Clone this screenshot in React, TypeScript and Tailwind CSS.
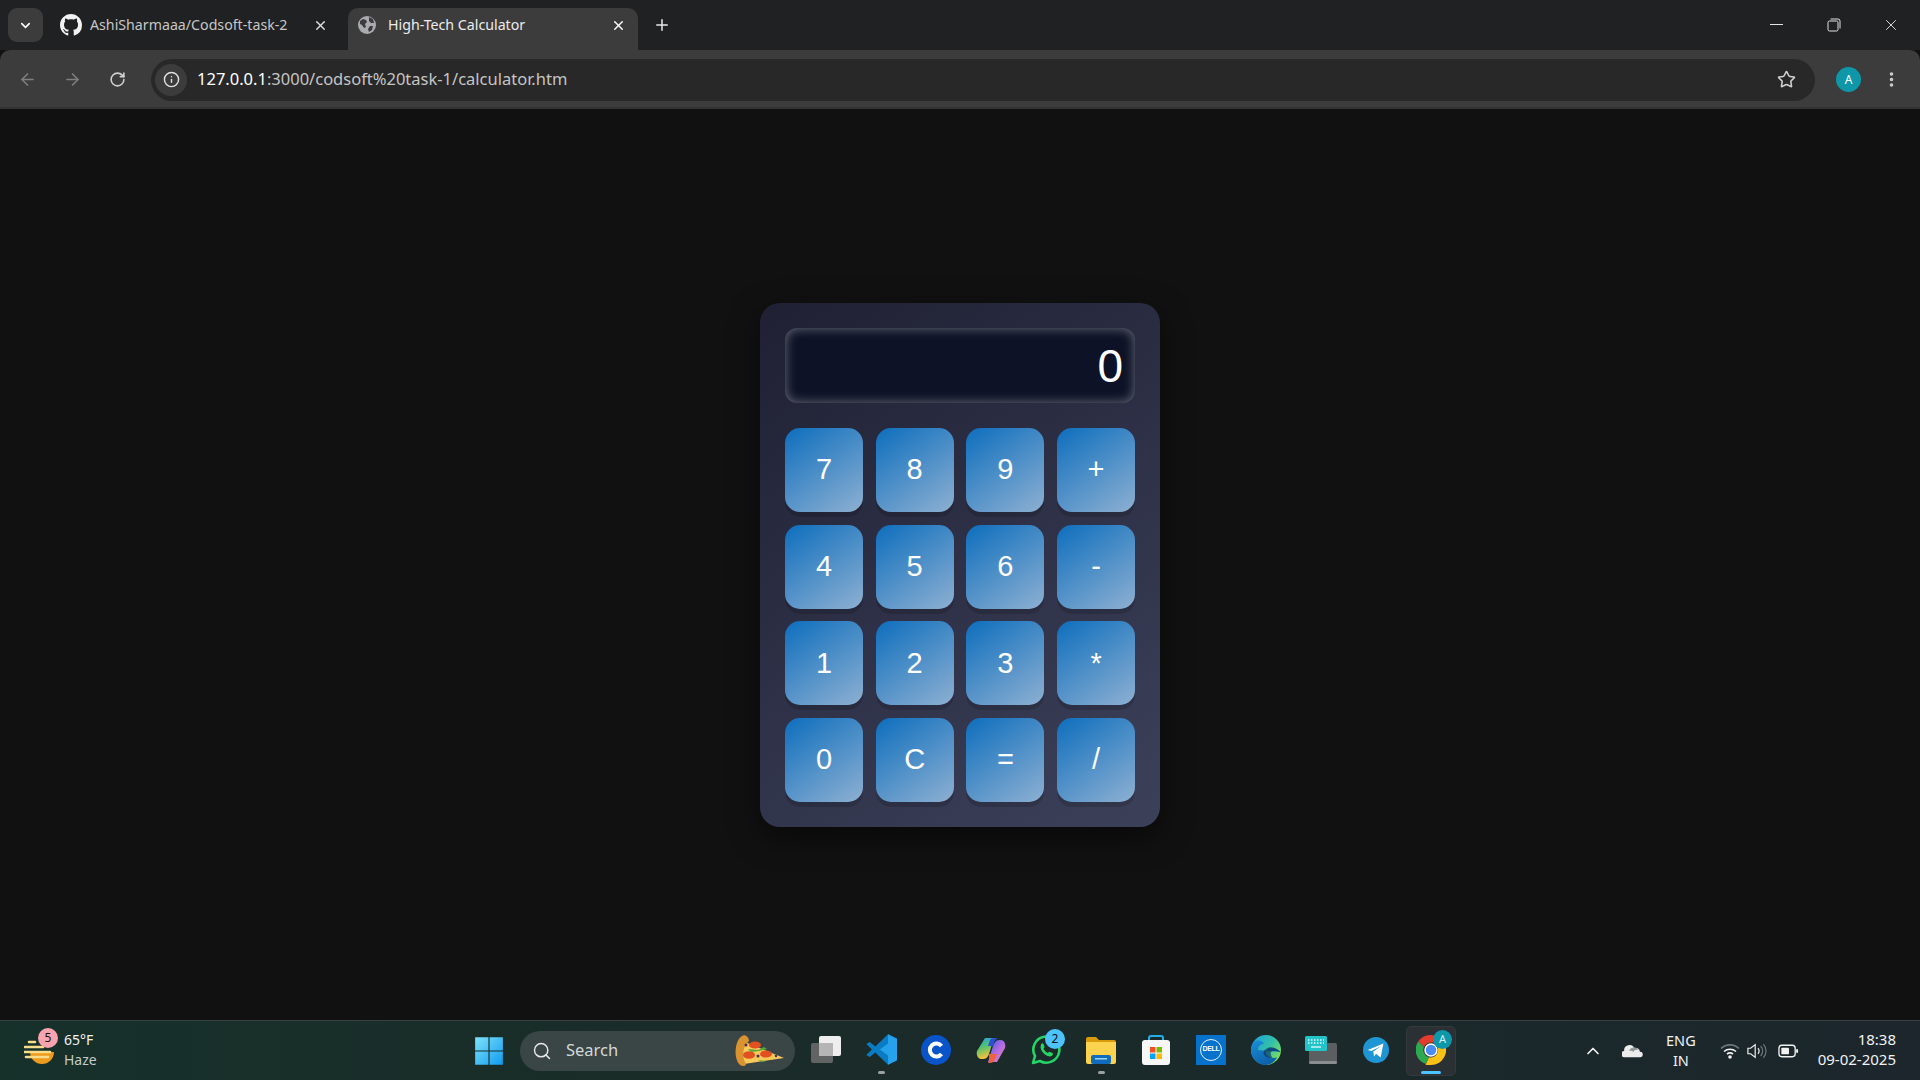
import { ArrowLeft, ArrowRight, ChevronDown, ChevronUp, Info, MoreVertical, Plus, RotateCw, Search, Star, X } from "lucide-react";
import type { ReactNode } from "react";

const KEYS = ["7", "8", "9", "+", "4", "5", "6", "-", "1", "2", "3", "*", "0", "C", "=", "/"];

function GitHubMark() {
  return (
    <svg viewBox="0 0 16 16" className="h-[22px] w-[22px]" fill="#f2f2f2">
      <path d="M8 0C3.58 0 0 3.58 0 8c0 3.54 2.29 6.53 5.47 7.59.4.07.55-.17.55-.38 0-.19-.01-.82-.01-1.49-2.01.37-2.53-.49-2.69-.94-.09-.23-.48-.94-.82-1.13-.28-.15-.68-.52-.01-.53.63-.01 1.08.58 1.23.82.72 1.21 1.87.87 2.33.66.07-.52.28-.87.51-1.07-1.78-.2-3.64-.89-3.64-3.95 0-.87.31-1.59.82-2.15-.08-.2-.36-1.02.08-2.12 0 0 .67-.21 2.2.82.64-.18 1.32-.27 2-.27s1.36.09 2 .27c1.53-1.04 2.2-.82 2.2-.82.44 1.1.16 1.92.08 2.12.51.56.82 1.27.82 2.15 0 3.07-1.87 3.75-3.65 3.95.29.25.54.73.54 1.48 0 1.07-.01 1.93-.01 2.2 0 .21.15.46.55.38A8.01 8.01 0 0 0 16 8c0-4.42-3.58-8-8-8z" />
    </svg>
  );
}

function GlobeMark() {
  return (
    <svg viewBox="0 0 18 18" className="h-[18px] w-[18px]">
      <circle cx="9" cy="9" r="9" fill="#a9abae" />
      <path d="M2 5l3-2 3 1 1 2-2 2 1 3-2 1-2-3-2-1zM11 1l4 2 1 4-3 0-2-2zM12 10l3 0-1 4-3 2-1-3z" fill="#3c3c3c" />
    </svg>
  );
}

function BrowserChrome() {
  return (
    <header className="shrink-0 font-['Noto_Sans',sans-serif]">
      <div className="flex h-[50px] items-start bg-[#1f2122] pl-2 text-[14.2px]">
        <div className="mt-2 flex h-[34px] w-[35px] items-center justify-center rounded-[9px] bg-[#3c3c3c] text-white">
          <ChevronDown size={15} strokeWidth={2.5} />
        </div>
        <div className="ml-[17px] flex h-[50px] w-[288px] items-center text-[#c7c7c7]">
          <GitHubMark />
          <span className="ml-[8px] flex-1">AshiSharmaaa/Codsoft-task-2</span>
          <X size={15} strokeWidth={2.25} className="mr-[20px] text-[#dedede]" />
        </div>
        <div className="mt-2 flex h-[42px] w-[290px] items-center rounded-t-[10px] bg-[#3c3c3c] pb-[8px] pl-[10px] text-[#ececec]">
          <GlobeMark />
          <span className="ml-[12px] flex-1">High-Tech Calculator</span>
          <X size={15} strokeWidth={2.25} className="mr-[12px] text-white" />
        </div>
        <Plus size={18} strokeWidth={2} className="ml-[15px] mt-4 text-[#e8e8e8]" />
        <div className="ml-auto flex h-[50px] items-center">
          <svg viewBox="0 0 14 14" className="mr-[43px] h-[14px] w-[14px]" fill="none" stroke="#e4e4e4" strokeWidth="1">
            <path d="M0 9.5h13" transform="translate(0 -3)" />
          </svg>
          <svg viewBox="0 0 14 14" className="mr-[41px] h-[14px] w-[14px]" fill="none" stroke="#e4e4e4" strokeWidth="1">
            <rect x="1" y="3" width="10" height="10" rx="1.5" />
            <path d="M3.5 1h7.5a2 2 0 0 1 2 2v7.5" />
          </svg>
          <X size={18} strokeWidth={1.2} className="mr-[20px] text-[#ececec]" />
        </div>
      </div>
      <div className="flex h-[59px] items-center rounded-t-[10px] bg-[#3c3c3c] pl-[18px] pr-0 shadow-[inset_0_-2px_0_#333]">
        <ArrowLeft size={19} strokeWidth={2} className="text-[#7f7f7f]" />
        <ArrowRight size={19} strokeWidth={2} className="ml-[26px] text-[#7f7f7f]" />
        <RotateCw size={17} strokeWidth={2.25} className="ml-[27px] text-[#d0d0d0]" />
        <div className="ml-[25px] flex h-[42px] w-[1664px] items-center rounded-full bg-[#282828] pl-[4px] pr-[19px]">
          <span className="flex h-[32px] w-[32px] items-center justify-center rounded-full bg-[#3c3c3c] text-[#e2e2e2]">
            <Info size={17} strokeWidth={2} />
          </span>
          <span className="ml-[10px] flex-1 text-[16.5px] text-[#c5c5c5]">
            <span className="text-white">127.0.0.1</span>:3000/codsoft%20task-1/calculator.htm
          </span>
          <Star size={19} strokeWidth={2} className="text-[#d0d0d0]" />
        </div>
        <span className="ml-[21px] flex h-[25px] w-[25px] items-center justify-center rounded-full bg-[#0e97a8] text-[12px] text-white">
          A
        </span>
        <MoreVertical size={19} strokeWidth={2.5} className="ml-[21px] text-[#d0d0d0]" />
      </div>
    </header>
  );
}

function Calculator() {
  return (
    <div className="flex w-[400px] flex-col gap-[25px] rounded-[20px] bg-[linear-gradient(145deg,#1f2033,#3c415a)] p-[25px] font-['Liberation_Sans',Arial,sans-serif] shadow-[0_10px_30px_rgba(0,0,0,0.5)]">
      <div className="flex h-[75px] items-center justify-end rounded-[12px] bg-[#0d1226] pr-[12px] pt-[2px] text-[46px] text-white shadow-[inset_0_0_12px_rgba(255,255,255,0.4)]">
        0
      </div>
      <div className="grid grid-cols-4 gap-[12.8px]">
        {KEYS.map((key) => (
          <button
            key={key}
            type="button"
            className="flex h-[84px] items-center justify-center rounded-[15px] bg-[linear-gradient(145deg,#0d6ebd,#8eb0d2)] text-[29px] text-white shadow-[0_5px_0_rgba(0,0,0,0.14)]"
          >
            {key}
          </button>
        ))}
      </div>
    </div>
  );
}

function AppIcon({ children, dot, active }: { children: ReactNode; dot?: boolean; active?: boolean }) {
  return (
    <div className={`relative flex h-[50px] w-[50px] items-center justify-center rounded-[5px] pb-[2px] ${active ? "border border-[#34393c] bg-[#2a3034]" : ""}`}>
      {children}
      {dot ? <span className="absolute bottom-[2px] h-[3px] w-[7px] rounded-full bg-[#9aa0a3]" /> : null}
      {active ? <span className="absolute bottom-[1px] h-[3px] w-[20px] rounded-full bg-[#4cc2ff]" /> : null}
    </div>
  );
}

function Badge({ children, className }: { children: ReactNode; className: string }) {
  return (
    <span className={`absolute flex h-[20px] w-[20px] items-center justify-center rounded-full text-[12px] text-[#111] ${className}`}>
      {children}
    </span>
  );
}

function WindowsLogo() {
  return (
    <svg viewBox="0 0 26 26" className="h-[30px] w-[30px]">
      <defs>
        <linearGradient id="win" x1="0" y1="0" x2="1" y2="1">
          <stop offset="0" stopColor="#7fe3fa" />
          <stop offset="1" stopColor="#0f9bf0" />
        </linearGradient>
      </defs>
      <path d="M1 1h11.5v11.5H1zM13.5 1H25v11.5H13.5zM1 13.5h11.5V25H1zM13.5 13.5H25V25H13.5z" fill="url(#win)" />
    </svg>
  );
}

function Pizza() {
  return (
    <svg viewBox="0 0 54 34" className="h-[34px] w-[54px]">
      <path d="M8 6 52 24 12 30Z" fill="#f6c95a" />
      <path d="M10 2C3 6 1 24 8 31c3 2 6 1 6-1C9 22 11 12 17 7c0-4-4-7-7-5Z" fill="#d9932f" />
      <ellipse cx="23" cy="11" rx="6" ry="3.6" fill="#e2501f" />
      <ellipse cx="17" cy="21" rx="6" ry="3.8" fill="#e2501f" />
      <ellipse cx="34" cy="20" rx="6" ry="3.6" fill="#e2501f" />
      <path d="M16 15l10 1 6-3 3 2-8 2-8 1zM26 26l8 1-3 1zM42 20l4 2-3 0z" fill="#5aa63a" />
      <circle cx="14" cy="11" r="1.5" fill="#4b2a5e" />
      <circle cx="26" cy="22" r="1.5" fill="#4b2a5e" />
      <circle cx="44" cy="22" r="1.2" fill="#4b2a5e" />
    </svg>
  );
}

function TaskView() {
  return (
    <svg viewBox="0 0 32 30" className="h-[30px] w-[32px]">
      <rect x="9" y="1" width="22" height="20" rx="2" fill="#eeeeee" />
      <rect x="1" y="8" width="22" height="20" rx="2" fill="#6a6a6a" fillOpacity="0.9" />
      <rect x="9" y="8" width="14" height="13" fill="#b5b5b5" />
    </svg>
  );
}

function VsCode() {
  return (
    <svg viewBox="0 0 100 100" className="h-[31px] w-[31px]">
      <path d="M71 99 100 85V15L71 1 30 40 12 26 1 32l18 18L1 68l11 6 18-14z" fill="#0a7cc4" />
      <path d="M71 99 100 85V15L71 1v30L45 50l26 19z" fill="#26a2ec" />
    </svg>
  );
}

function CanvaC() {
  return (
    <svg viewBox="0 0 30 30" className="h-[30px] w-[30px]">
      <circle cx="15" cy="15" r="15" fill="#0a54c9" />
      <path d="M20.5 11a6.5 6.5 0 1 0 0 8" fill="none" stroke="#fff" strokeWidth="4" />
    </svg>
  );
}

function Copilot() {
  return (
    <svg viewBox="0 0 30 30" className="h-[30px] w-[30px]">
      <defs>
        <linearGradient id="cpa" x1="0" y1="0" x2="0.3" y2="1">
          <stop offset="0" stopColor="#1f9cf0" />
          <stop offset="0.5" stopColor="#55c46a" />
          <stop offset="1" stopColor="#f7c23c" />
        </linearGradient>
        <linearGradient id="cpb" x1="0" y1="0" x2="1" y2="1">
          <stop offset="0" stopColor="#2d5be3" />
          <stop offset="0.5" stopColor="#b06be0" />
          <stop offset="1" stopColor="#f08ab0" />
        </linearGradient>
      </defs>
      <path d="M9 3h9l-5 16c-1 3-3 5-6 5H5C2 24 0 20 1 16z" fill="url(#cpa)" />
      <path d="M21 27h-9l5-16c1-3 3-6 6-6h2c3 0 5 4 4 8z" fill="url(#cpb)" />
      <path d="M13 19h8l-3 7c-1 1-2 2-4 2h-2c2-2 1-6 1-9z" fill="#f0613d" />
      <path d="M17 11h-5l2-6c1-2 3-2 5-2h3c-3 1-4 5-5 8z" fill="#2e4fd0" />
    </svg>
  );
}

function WhatsApp() {
  return (
    <svg viewBox="0 0 30 30" className="h-[30px] w-[30px]">
      <path d="M2 28l2-7A13 13 0 1 1 9 26z" fill="none" stroke="#25d366" strokeWidth="2.6" strokeLinejoin="round" />
      <path d="M10 9c1-1 2-1 2.500 0l1 2.500c.2 1-.8 1.500-1 2.200 1 2 2.500 3.300 4.300 4.200.7-.3 1.300-1.400 2.200-1l2.500 1.200c.8.500.5 2-.5 2.700-2 1.300-4.500.5-7-1.300-3-2.300-5.500-6.500-4-9.500z" fill="#25d366" />
    </svg>
  );
}

function Explorer() {
  return (
    <svg viewBox="0 0 30 28" className="h-[28px] w-[30px]">
      <path d="M0 3a2 2 0 0 1 2-2h8l3 3h15a2 2 0 0 1 2 2v4H0z" fill="#d99b0b" />
      <path d="M0 6h30v20a2 2 0 0 1-2 2H2a2 2 0 0 1-2-2z" fill="#fcd34f" />
      <rect x="5" y="19" width="20" height="9" rx="2" fill="#0f6cbd" />
      <rect x="9" y="22" width="12" height="1.500" fill="#9fd3f5" />
    </svg>
  );
}

function Store() {
  return (
    <svg viewBox="0 0 30 30" className="h-[30px] w-[30px]">
      <path d="M8 7V3a2 2 0 0 1 2-2h10a2 2 0 0 1 2 2v4" fill="none" stroke="#22aee6" strokeWidth="2" />
      <rect x="1" y="5" width="28" height="25" rx="3" fill="#f7f7f7" />
      <rect x="9" y="12" width="5.500" height="5.500" fill="#f25022" />
      <rect x="15.500" y="12" width="5.500" height="5.500" fill="#7fba00" />
      <rect x="9" y="18.500" width="5.500" height="5.500" fill="#00a4ef" />
      <rect x="15.500" y="18.500" width="5.500" height="5.500" fill="#ffb900" />
    </svg>
  );
}

function Dell() {
  return (
    <div className="flex h-[30px] w-[30px] items-center justify-center bg-[#0672cb]">
      <div className="flex h-[22px] w-[22px] items-center justify-center rounded-full border border-[#e6f2fb] font-['Liberation_Sans',sans-serif] text-[7px] font-bold tracking-[-0.3px] text-white">
        DELL
      </div>
    </div>
  );
}

function Edge() {
  return (
    <svg viewBox="0 0 30 30" className="h-[30px] w-[30px]">
      <defs>
        <linearGradient id="edgea" x1="0" y1="0" x2="1" y2="0.7">
          <stop offset="0" stopColor="#1b9de2" />
          <stop offset="0.6" stopColor="#34c1a8" />
          <stop offset="1" stopColor="#7ee05a" />
        </linearGradient>
        <linearGradient id="edgeb" x1="0" y1="0" x2="0.6" y2="1">
          <stop offset="0" stopColor="#1a8fdc" />
          <stop offset="1" stopColor="#0c5da5" />
        </linearGradient>
      </defs>
      <circle cx="15" cy="15" r="15" fill="url(#edgea)" />
      <path d="M29.500 17c-3-3.500-8-5-12-3.500-2.500 1-3.500 3.500-2 6 1.800 3 6 4 10.500 3-2.500 4.500-6.500 7.500-11 7.500C6 30 0 23 0 15c0-4 2-7 3-8 4-3 9-1 10 2-3-.5-6 2-6 6" fill="url(#edgeb)" />
      <path d="M15 14c4-3 9-2 14 2.500l.5 1c-3-2-7-2.500-9-1-1.500 1-1 4 1 6-4 1-9-1-9-5 0-1.500 1-2.800 2.500-3.500z" fill="#0f2f5e" fillOpacity="0.65" />
    </svg>
  );
}

function KeyboardApp() {
  return (
    <svg viewBox="0 0 32 30" className="h-[30px] w-[32px]">
      <rect x="4" y="8" width="28" height="21" rx="2" fill="#5c5f61" />
      <rect x="4" y="26" width="28" height="3" rx="1.500" fill="#8a8d8f" />
      <rect x="0" y="1" width="22" height="15" rx="1.500" fill="#22c3c9" />
      <path d="M3 5h16M3 8h16" stroke="#e8fbfb" strokeWidth="1.300" strokeDasharray="1.500 1.500" />
      <path d="M6 12h10" stroke="#e8fbfb" strokeWidth="1.300" />
    </svg>
  );
}

function Telegram() {
  return (
    <svg viewBox="0 0 28 28" className="h-[26px] w-[26px]">
      <circle cx="14" cy="14" r="14" fill="#1f96d4" />
      <path d="M5 14 22 7l-3 15-5-4-2 3-1-5 8-6-10 5z" fill="#fff" />
    </svg>
  );
}

function ChromeIcon() {
  return (
    <svg viewBox="0 0 30 30" className="h-[30px] w-[30px]">
      <path d="M15 0a15 15 0 0 1 13 7.500H15a7.500 7.500 0 0 0-7 4.500L2.200 6.500A15 15 0 0 1 15 0z" fill="#e33b2e" />
      <path d="M2.200 6.500 8 12a7.500 7.500 0 0 0 5 10.200L9.500 29A15 15 0 0 1 2.200 6.500z" fill="#2da94f" />
      <path d="M28 7.500A15 15 0 0 1 15 30H9.500L13 22.200A7.500 7.500 0 0 0 21 11l-1-3.500z" fill="#fbc116" />
      <circle cx="15" cy="15" r="6" fill="#4b8bf5" stroke="#fff" strokeWidth="1.500" />
    </svg>
  );
}

function Taskbar() {
  return (
    <footer className="relative flex h-[60px] shrink-0 items-center border-t border-[#3a4143] bg-[linear-gradient(90deg,#16302a,#1a2c28_35%,#1a2a2a_60%,#1c262c)] font-['Noto_Sans',sans-serif] text-white">
      <div className="relative ml-[24px] flex w-[450px] items-center">
        <svg viewBox="0 0 30 30" className="mt-[2px] h-[30px] w-[30px]">
          <path d="M6 15h24a12 12 0 0 1-24 0z" fill="#ee9a1d" />
          <path d="M5 5h6M1 10h18M0 15h26M2 20h22" stroke="#f7dc8a" strokeWidth="2.600" strokeLinecap="round" />
        </svg>
        <Badge className="left-[14px] top-[-3px] bg-[#f9a3ae]">5</Badge>
        <div className="ml-[10px] -translate-y-[1px] text-[14px] leading-[20px]">
          <p className="text-[#f2f2f2]">65°F</p>
          <p className="text-[#c4caca]">Haze</p>
        </div>
      </div>
      <WindowsLogo />
      <div className="ml-[16px] mr-[6px] flex h-[40px] w-[275px] items-center rounded-full bg-[#3a4545] pl-[12px] pr-[9px]">
        <Search size={20} strokeWidth={1.75} className="text-[#e8e8e8]" />
        <span className="ml-[14px] flex-1 text-[16.5px] text-[#d4d8d8]">Search</span>
        <Pizza />
      </div>
      <div className="flex items-center gap-[5px]">
        <AppIcon><TaskView /></AppIcon>
        <AppIcon dot><VsCode /></AppIcon>
        <AppIcon><CanvaC /></AppIcon>
        <AppIcon><Copilot /></AppIcon>
        <AppIcon>
          <WhatsApp />
          <Badge className="right-[6px] top-[3px] bg-[#4cc2ff]">2</Badge>
        </AppIcon>
        <AppIcon dot><Explorer /></AppIcon>
        <AppIcon><Store /></AppIcon>
        <AppIcon><Dell /></AppIcon>
        <AppIcon><Edge /></AppIcon>
        <AppIcon><KeyboardApp /></AppIcon>
        <AppIcon><Telegram /></AppIcon>
        <AppIcon active>
          <ChromeIcon />
          <span className="absolute right-[3px] top-[3px] flex h-[19px] w-[19px] items-center justify-center rounded-full bg-[#0e97a8] text-[11px] text-[#d7eef2]">A</span>
        </AppIcon>
      </div>
      <div className="ml-auto flex items-center pr-[24px] text-[#f2f2f2]">
        <ChevronUp size={20} strokeWidth={2} />
        <svg viewBox="0 0 24 16" className="ml-[19px] h-[16px] w-[21px]">
          <path d="M3 15a3.500 3.500 0 0 1-.5-7A6 6 0 0 1 14 5a4.500 4.500 0 0 1 6.500 4A3 3 0 0 1 21 15z" fill="#ececec" />
          <path d="M8 8a6 6 0 0 1 11-1c-3-1-5 0-6 2-2-1.500-3.500-1.500-5-1z" fill="#8f9698" />
        </svg>
        <div className="ml-[23px] -translate-y-[1px] text-center text-[14.5px] leading-[20px]">
          <p>ENG</p>
          <p>IN</p>
        </div>
        <svg viewBox="0 0 20 16" className="ml-[24px] h-[16px] w-[20px]" fill="none" stroke="#f2f2f2" strokeWidth="1.600">
          <path d="M1 5.500a13 13 0 0 1 18 0" stroke="#6f7678" />
          <path d="M4 8.500a9 9 0 0 1 12 0" />
          <path d="M7 11a5 5 0 0 1 6 0" />
          <circle cx="10" cy="14" r="1" fill="#f2f2f2" />
        </svg>
        <svg viewBox="0 0 22 18" className="ml-[7px] h-[18px] w-[20px]" fill="none" stroke="#f2f2f2" strokeWidth="1.300">
          <path d="M1 6h3l5-4v14l-5-4H1z" />
          <path d="M12 6a4 4 0 0 1 0 6" />
          <path d="M15 3.500a8 8 0 0 1 0 11M18 1.500a11 11 0 0 1 0 15" stroke="#6f7678" />
        </svg>
        <svg viewBox="0 0 22 14" className="ml-[11px] h-[14px] w-[21px]" fill="none">
          <rect x="1" y="1" width="17" height="12" rx="3" stroke="#f2f2f2" strokeWidth="1.400" />
          <rect x="3.500" y="3.500" width="8" height="7" rx="1" fill="#f2f2f2" />
          <rect x="19" y="5" width="2" height="4" rx="1" fill="#f2f2f2" />
        </svg>
        <div className="ml-[19px] -translate-y-[2px] text-right text-[15px] leading-[20px]">
          <p>18:38</p>
          <p>09-02-2025</p>
        </div>
      </div>
    </footer>
  );
}

export default function App() {
  return (
    <div className="flex h-screen flex-col overflow-hidden bg-[#111111]">
      <BrowserChrome />
      <main className="flex flex-1 items-center justify-center pt-[1px]">
        <Calculator />
      </main>
      <Taskbar />
    </div>
  );
}
